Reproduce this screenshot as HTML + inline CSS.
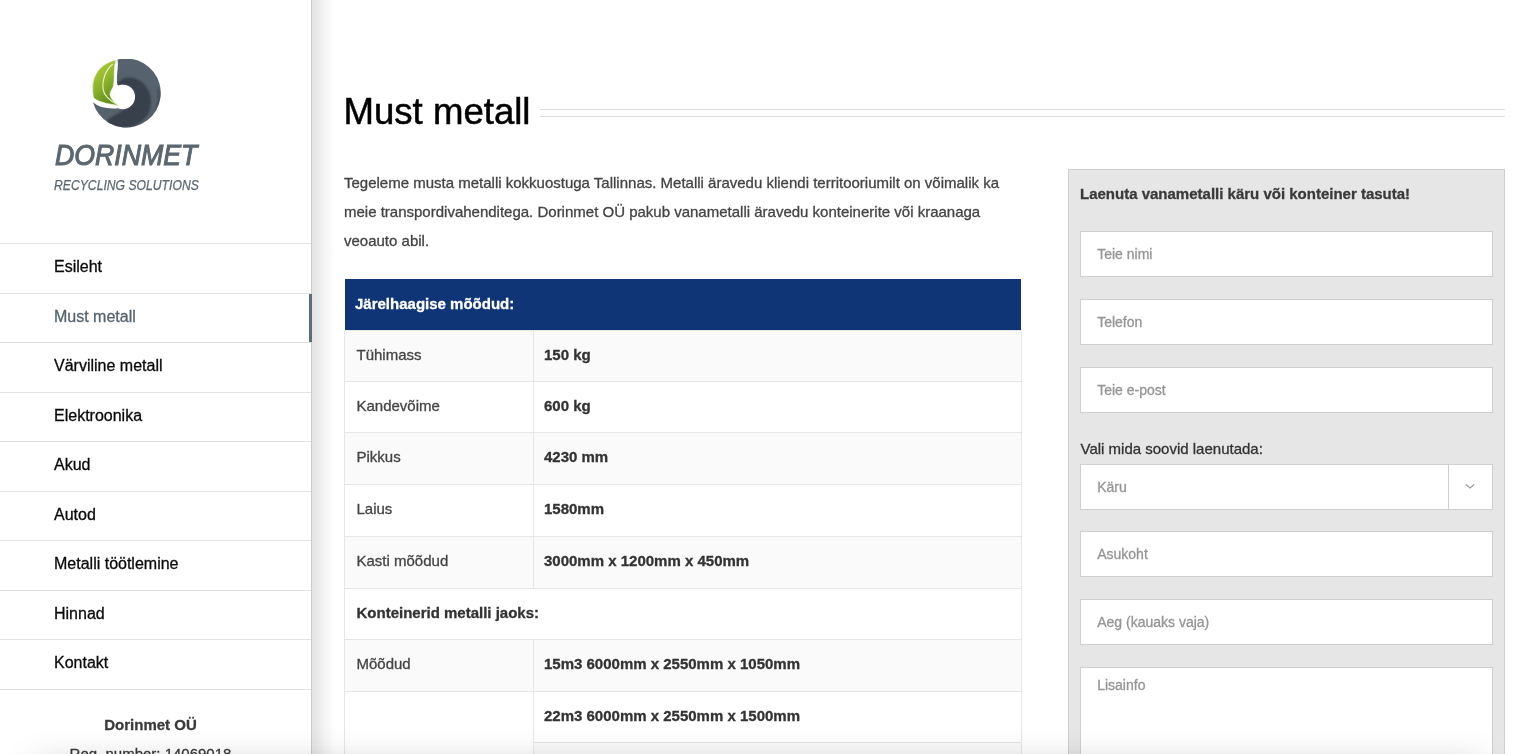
<!DOCTYPE html>
<html><head><meta charset="utf-8">
<style>
*{box-sizing:border-box;margin:0;padding:0}
html,body{width:1520px;height:754px;overflow:hidden;background:#fff;font-family:"Liberation Sans",sans-serif}
#wrap{position:absolute;left:0;top:0;width:1520px;height:754px;background:#fff;will-change:transform;-webkit-text-stroke-width:0.3px}
#side{position:absolute;left:0;top:0;width:312px;height:754px;background:#fff;border-right:1px solid #cbcbcb;z-index:2}
#shadow{position:absolute;left:312px;top:0;width:24px;height:754px;background:linear-gradient(to right,rgba(0,0,0,0.105),rgba(0,0,0,0.095) 17%,rgba(0,0,0,0.047) 50%,rgba(0,0,0,0.012) 83%,rgba(0,0,0,0));z-index:1}
#logo{position:absolute;left:92px;top:59px;width:70px;height:70px}
#brand{position:absolute;left:54.5px;top:137.6px;font-size:29.5px;font-weight:normal;-webkit-text-stroke:1.1px #5b6770;font-style:italic;color:#5b6770;white-space:nowrap;transform:scaleX(0.905);transform-origin:0 0}
#tag{position:absolute;left:54px;top:177px;font-size:14.5px;font-style:italic;color:#5b6770;-webkit-text-stroke:0.25px #5b6770;white-space:nowrap;transform:scaleX(0.84);transform-origin:0 0}
#nav{position:absolute;left:0;top:243px;width:311px}
#nav div span{position:relative;top:-0.5px}
#nav div{height:49.5px;border-top:1px solid #e3e3e3;padding-left:54px;font-size:16px;line-height:45.4px;color:#0a0a0a;position:relative}
#nav div.act{color:#55636f;-webkit-text-stroke-color:#55636f}
#nav div.act:after{content:"";position:absolute;right:-1px;top:0;width:3px;height:100%;background:#5c6c78}
#comp{position:absolute;left:0;top:709.6px;width:301px;text-align:center;font-size:15px;line-height:29px;color:#3a3a3a}
#main{position:absolute;left:345px;top:0}
h1{position:absolute;left:343.5px;top:90.8px;font-size:36.6px;-webkit-text-stroke:0.5px #000;font-weight:normal;color:#000;white-space:nowrap}
#dl{position:absolute;left:539.5px;top:109px;width:965.5px;height:8px;border-top:1px solid #ddd;border-bottom:1px solid #ddd}
#intro{position:absolute;left:344px;top:168px;width:680px;font-size:15px;line-height:29px;color:#444}
#tbl{position:absolute;left:344px;top:0;width:678px;height:754px;font-size:15px;color:#444}
#tbl b{color:#333}
.tr{position:absolute;left:0;width:678px;height:51.6px;border:1px solid #e6e6e6;border-bottom:0;background:#fff}
.tr.g{background:#fafafa}
.tr.th{background:#0f3576;border:0;left:1px;width:676px;color:#fff;font-weight:bold;padding-left:10px;line-height:48px;padding-top:1px}
.c1{position:absolute;left:0;top:0;width:188px;height:100%;padding-left:11.5px;line-height:48px}
.c1.span{width:676px}
.tr.rs{border-top-color:transparent}
.tr.rs .c1{background:#fff;top:-1px;height:calc(100% + 1px)}
.tr.rs .c2{border-top:1px solid #e6e6e6;top:-1px;height:calc(100% + 1px)}
.c2{position:absolute;left:188px;right:0;top:0;height:100%;border-left:1px solid #e6e6e6;padding-left:10px;line-height:48px}
#form{position:absolute;left:1068px;top:169px;width:437px;height:600px;background:#e6e6e6;border:1px solid #cfcfcf}
#ftitle{position:absolute;left:11px;top:15.2px;font-size:15px;font-weight:bold;color:#3a3a3a;white-space:nowrap}
.inp{position:absolute;left:11px;width:413px;height:46px;background:#fff;border:1px solid #cfcfcf;font-size:14px;color:#959595;padding-left:16.2px;line-height:44.6px}
#flabel{position:absolute;left:11.5px;top:270.3px;font-size:15px;color:#333}
#sel .arr{position:absolute;right:0;top:0;width:44px;height:44px;border-left:1px solid #cfcfcf}
#sel svg{position:absolute;left:16px;top:17.5px}
#botshade{position:absolute;left:40px;top:768px;width:1440px;height:60px;background:#fff;box-shadow:0 0 36px 4px rgba(0,0,0,0.2);z-index:5}
</style></head><body><div id="wrap">
<div id="side">
  <svg id="logo" viewBox="0 0 70 70">
    <defs>
      <linearGradient id="gl" x1="0" y1="0" x2="0.5" y2="1"><stop offset="0" stop-color="#b9d443"/><stop offset="0.55" stop-color="#8cb52c"/><stop offset="1" stop-color="#5f8c1f"/></linearGradient>
      <clipPath id="cp"><path d="M25.5 0.6 A34.5 34.5 0 1 1 1 43.2 Q9 50.5 26 49.2 A12.3 12.3 0 1 0 25.94 26.6 L25.5 25.5 C23.5 18 27 8 25.5 0.6 Z"/></clipPath>
      <filter id="bl" x="-20%" y="-20%" width="140%" height="140%"><feGaussianBlur stdDeviation="1"/></filter>
    </defs>
    <g clip-path="url(#cp)">
      <rect x="0" y="0" width="70" height="70" fill="#56626d"/>
      <path filter="url(#bl)" fill="#37414b" d="M24 28 C26 20 35 17 42 19 C52 22 59 31 59 43 C59 55 52 62 42 67 C34 70 22 70 12 64 C18 58 26 55 31 51 C40 49 44 40 42 31 C38 25 30 25 24 28 Z"/>
      <path filter="url(#bl)" fill="none" stroke="#39424b" stroke-width="1.6" d="M66 30 C70 48 62 62 48 68"/>
    </g>
    <path fill="url(#gl)" stroke="#eef5cf" stroke-width="0.6" d="M26.6 46.5 C18 45 6 43.5 1.5 38.5 C-1.5 22 3 6 24.5 1 C21 7 23 18 21.5 26 C21 30 17 33 18.2 37 C19.5 41 23 44 26.6 46.5 Z"/>
    <path fill="none" stroke="#e9f2b8" stroke-width="1.2" d="M26.6 46.3 C20 43 12 38 11 30 C10 22 13 11 21 5"/>
  </svg>
  <div id="brand">DORINMET</div>
  <div id="tag">RECYCLING SOLUTIONS</div>
  <div id="nav">
    <div>Esileht</div>
    <div class="act">Must metall</div>
    <div>Värviline metall</div>
    <div>Elektroonika</div>
    <div>Akud</div>
    <div>Autod</div>
    <div>Metalli töötlemine</div>
    <div>Hinnad</div>
    <div>Kontakt</div>
    <div></div>
  </div>
  <div id="comp"><b>Dorinmet OÜ</b><br>Reg. number: 14069018</div>
</div>
<div id="shadow"></div>
<h1>Must metall</h1>
<div id="dl"></div>
<div id="intro">Tegeleme musta metalli kokkuostuga Tallinnas. Metalli äravedu kliendi territooriumilt on võimalik ka meie transpordivahenditega. Dorinmet OÜ pakub vanametalli äravedu konteinerite või kraanaga veoauto abil.</div>
<div id="tbl">
<div class="tr th" style="top:279px;height:51px">Järelhaagise mõõdud:</div>
<div class="tr g" style="top:330px;height:51px"><div class="c1">Tühimass</div><div class="c2"><b>150 kg</b></div></div>
<div class="tr" style="top:381px;height:51px"><div class="c1">Kandevõime</div><div class="c2"><b>600 kg</b></div></div>
<div class="tr g" style="top:432px;height:52px"><div class="c1">Pikkus</div><div class="c2"><b>4230 mm</b></div></div>
<div class="tr" style="top:484px;height:52px"><div class="c1">Laius</div><div class="c2"><b>1580mm</b></div></div>
<div class="tr g" style="top:536px;height:52px"><div class="c1">Kasti mõõdud</div><div class="c2"><b>3000mm x 1200mm x 450mm</b></div></div>
<div class="tr" style="top:588px;height:51px"><div class="c1 span"><b>Konteinerid metalli jaoks:</b></div></div>
<div class="tr g" style="top:639px;height:52px"><div class="c1">Mõõdud</div><div class="c2"><b>15m3 6000mm x 2550mm x 1050mm</b></div></div>
<div class="tr" style="top:691px;height:52px"><div class="c1"></div><div class="c2"><b>22m3 6000mm x 2550mm x 1500mm</b></div></div>
<div class="tr g rs" style="top:742px;height:52px"><div class="c1"></div><div class="c2"><b>30m3 6000mm x 2550mm x 2000mm</b></div></div>
</div>
<div id="form">
  <div id="ftitle">Laenuta vanametalli käru või konteiner tasuta!</div>
  <div class="inp" style="top:61px">Teie nimi</div>
  <div class="inp" style="top:129px">Telefon</div>
  <div class="inp" style="top:197px">Teie e-post</div>
  <div id="flabel">Vali mida soovid laenutada:</div>
  <div class="inp" id="sel" style="top:294px">Käru<div class="arr"><svg width="10" height="7" viewBox="0 0 10 7"><path d="M0.8 1.5 L5 5 L9.2 1.5" fill="none" stroke="#9a9a9a" stroke-width="1.2"/></svg></div></div>
  <div class="inp" style="top:361px">Asukoht</div>
  <div class="inp" style="top:429px">Aeg (kauaks vaja)</div>
  <div class="inp" style="top:497px;height:120px;line-height:normal;padding-top:9px">Lisainfo</div>
</div>
<div id="botshade"></div>
</div></body></html>
